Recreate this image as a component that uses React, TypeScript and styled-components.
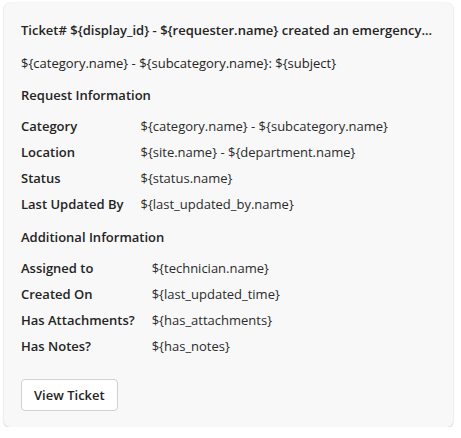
import styled, { createGlobalStyle } from "styled-components";

const GlobalStyle = createGlobalStyle`
  body {
    margin: 0;
    background: #ffffff;
    font-family: "Open Sans", "Noto Sans", sans-serif;
    color: #242424;
  }
`;

const Page = styled.div`
  padding: 3px 8px 0 4px;
`;

const Card = styled.div`
  width: 449px;
  box-sizing: border-box;
  background: #f8f8f8;
  border-radius: 6px;
  box-shadow: 0 0 2px rgba(0, 0, 0, 0.12), 0 1px 2px rgba(0, 0, 0, 0.14);
  padding: 17px 17px 16px 17px;
  display: flex;
  flex-direction: column;
`;

const Block = styled.div<{ $space?: number }>`
  margin-top: ${(p) => p.$space ?? 0}px;
`;

const Title = styled.div`
  font-size: 13px;
  font-weight: 600;
  line-height: 20px;
  white-space: nowrap;
`;

const Subtitle = styled.div`
  font-size: 13px;
  line-height: 20px;
`;

const Heading = styled.div`
  font-size: 13px;
  font-weight: 600;
  line-height: 20px;
`;

const FactSet = styled.div`
  display: grid;
  grid-template-columns: max-content 1fr;
  column-gap: 17px;
  row-gap: 6px;
  font-size: 13px;
  line-height: 20px;
`;

const FactLabel = styled.div`
  font-weight: 600;
`;

const FactValue = styled.div`
  color: #2b2b2b;
`;

const Button = styled.button`
  align-self: flex-start;
  height: 32px;
  padding: 0 12px;
  background: #ffffff;
  border: 1px solid #d1d1d1;
  border-radius: 4px;
  font-family: inherit;
  font-size: 13px;
  font-weight: 600;
  color: #242424;
  cursor: pointer;
`;

const requestFacts = [
  ["Category", "${category.name} - ${subcategory.name}"],
  ["Location", "${site.name} - ${department.name}"],
  ["Status", "${status.name}"],
  ["Last Updated By", "${last_updated_by.name}"],
];

const additionalFacts = [
  ["Assigned to", "${technician.name}"],
  ["Created On", "${last_updated_time}"],
  ["Has Attachments?", "${has_attachments}"],
  ["Has Notes?", "${has_notes}"],
];

const Facts = ({ facts }: { facts: string[][] }) => (
  <FactSet>
    {facts.flatMap(([label, value]) => [
      <FactLabel key={label}>{label}</FactLabel>,
      <FactValue key={label + "-v"}>{value}</FactValue>,
    ])}
  </FactSet>
);

const App = () => {
  return (
    <Page>
      <GlobalStyle />
      <Card>
        <Title>{"Ticket# ${display_id} - ${requester.name} created an emergency..."}</Title>
        <Block $space={13}>
          <Subtitle>{"${category.name} - ${subcategory.name}: ${subject}"}</Subtitle>
        </Block>
        <Block $space={12}>
          <Heading>Request Information</Heading>
        </Block>
        <Block $space={11}>
          <Facts facts={requestFacts} />
        </Block>
        <Block $space={13}>
          <Heading>Additional Information</Heading>
        </Block>
        <Block $space={11}>
          <Facts facts={additionalFacts} />
        </Block>
        <Block $space={23}>
          <Button>View Ticket</Button>
        </Block>
      </Card>
    </Page>
  );
};

export default App;
